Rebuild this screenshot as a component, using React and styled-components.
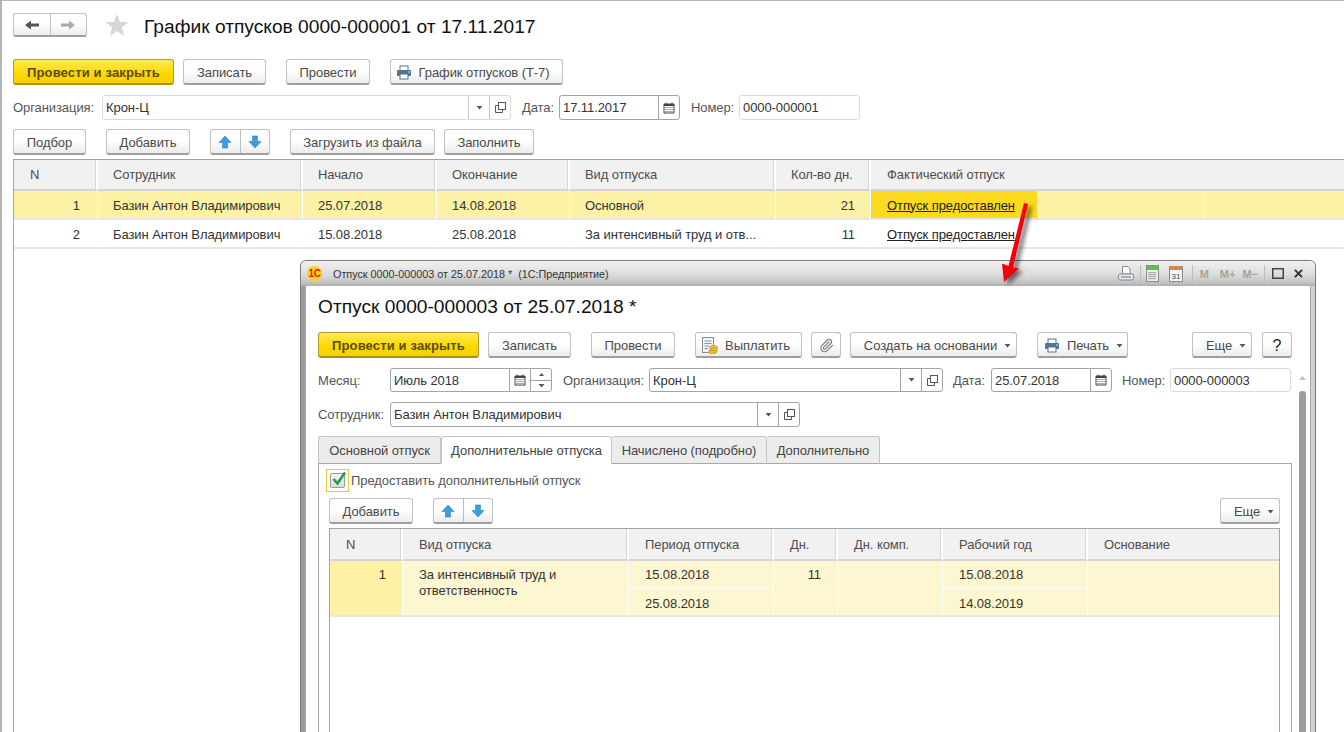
import React from 'react';
import styled, { createGlobalStyle } from 'styled-components';
import { Paperclip } from 'lucide-react';

const GlobalStyle = createGlobalStyle`
	html, body {
		margin: 0;
		padding: 0;
		background: #fff;
	}
	* {
		box-sizing: border-box;
	}
	body {
		font-family: "Liberation Sans", Arial, sans-serif;
		font-size: 13px;
		letter-spacing: -0.08px;
		color: #4a4a4a;
	}
`;

const Page = styled.div`
	position: relative;
	width: 1344px;
	height: 732px;
	overflow: hidden;
	display: flex;
	flex-direction: column;
	padding: 13px 0 0 11px;
	border-top: 1px solid #b5b5b5;
	border-left: 2px solid #b5b5b5;
`;

const HeaderRow = styled.div`
	display: flex;
	align-items: stretch;
	height: 24px;
	margin-top: -1px;
`;

const Title = styled.h1`
	margin: 0 0 0 15px;
	padding-top: 4px;
	align-self: center;
	font-weight: normal;
	font-size: 19.2px;
	letter-spacing: 0;
	line-height: 24px;
	color: #111;
	white-space: nowrap;
`;

const Star = styled.svg`
	width: 24px;
	height: 24px;
	margin-left: 18px;
	flex: none;
	align-self: center;
`;

const Toolbar = styled.div`
	display: flex;
	align-items: stretch;
	height: 26px;
	margin-top: ${p => p.$mt || 0}px;
`;

const Button = styled.div`
	display: flex;
	align-items: center;
	justify-content: center;
	gap: ${p => p.$gap || 7}px;
	width: ${p => p.$w}px;
	margin-left: ${p => p.$ml || 0}px;
	padding: 2px ${p => p.$pr || 0}px 0 ${p => p.$pl || 0}px;
	flex: none;
	border: 1px solid #c0c0c0;
	border-bottom: 2px solid #9e9e9e;
	border-radius: 3px;
	background: linear-gradient(#fff, #fff 45%, #ececec);
	color: #4a4a4a;
	white-space: nowrap;
`;

const DefaultButton = styled(Button)`
	border: 1px solid #b59c24;
	border-bottom: 2px solid #a88f1a;
	background: linear-gradient(#ffea55, #fcd800 60%, #f6d100);
	font-weight: bold;
	letter-spacing: 0.15px;
	color: #5a4a10;
`;

const HelpButton = styled(Button)`
	font-size: 16px;
	color: #222;
`;

const ButtonGroup = styled.div`
	display: flex;
	width: ${p => p.$w}px;
	margin-left: ${p => p.$ml || 0}px;
	flex: none;
	border: 1px solid #c0c0c0;
	border-bottom: 2px solid #9e9e9e;
	border-radius: 3px;
	background: linear-gradient(#fff, #fff 45%, #ececec);
`;

const GroupPart = styled.div`
	flex: 1;
	display: flex;
	align-items: center;
	justify-content: center;
	& + & {
		border-left: 1px solid #bdbdbd;
	}
`;

const FormRow = styled.div`
	display: flex;
	align-items: stretch;
	height: ${p => p.$h || 25}px;
	margin-top: ${p => p.$mt || 0}px;
`;

const Label = styled.div`
	display: flex;
	align-items: center;
	width: ${p => p.$w}px;
	margin-left: ${p => p.$ml || 0}px;
	flex: none;
	color: #555;
	white-space: nowrap;
`;

const Input = styled.div`
	display: flex;
	width: ${p => p.$w}px;
	flex: none;
	border: 1px solid ${p => (p.$light ? '#dcdcdc' : '#a4a4a4')};
	border-radius: 3px;
	background: #fff;
`;

const InputText = styled.div`
	flex: 1;
	display: flex;
	align-items: center;
	padding-left: 3px;
	color: #333;
	white-space: nowrap;
`;

const Addon = styled.div`
	width: 21px;
	flex: none;
	display: flex;
	flex-direction: column;
	align-items: center;
	justify-content: center;
	border-left: 1px solid ${p => (p.$light ? '#c8c8c8' : '#a4a4a4')};
`;

const SpinPart = styled.div`
	flex: 1;
	width: 100%;
	display: flex;
	align-items: center;
	justify-content: center;
	& + & {
		border-top: 1px solid #a4a4a4;
	}
`;

const TableWrap = styled.div`
	flex: 1;
	margin-top: ${p => p.$mt || 0}px;
	border-top: 1px solid #a3a3a3;
	border-left: 1px solid #a3a3a3;
	border-right: ${p => (p.$closed ? '1px solid #a3a3a3' : 'none')};
`;

const Grid = styled.div`
	--cell-pad: ${p => p.$pad}px;
	display: grid;
	grid-template-columns: ${p => p.$cols};
	grid-template-rows: ${p => p.$rows};
`;

const HeadCell = styled.div`
	display: flex;
	align-items: center;
	padding-left: ${p => (p.$pl ? `${p.$pl}px` : 'var(--cell-pad)')};
	background: #f1f1f1;
	border-right: ${p => (p.$last ? 'none' : '2px solid #fff')};
	border-bottom: 2px solid #d4d4d4;
	grid-column: span ${p => p.$span || 1};
	color: #4d4d4d;
	box-shadow: ${p => (p.$last ? 'none' : 'inset -1px 0 0 #d8d8d8')};
	white-space: nowrap;
`;

const Cell = styled.div`
	display: flex;
	align-items: ${p => (p.$top ? 'flex-start' : 'center')};
	justify-content: ${p => (p.$right ? 'flex-end' : 'flex-start')};
	padding-top: ${p => (p.$top ? 6 : 2)}px;
	padding-right: ${p => p.$right || 0}px;
	padding-left: ${p => (p.$right ? '0' : p.$pl ? `${p.$pl}px` : 'var(--cell-pad)')};
	background: ${p => p.$bg || '#fff'};
	border-right: 1px solid ${p => (p.$line ? '#fff' : 'transparent')};
	border-bottom: 2px solid #e6e6e6;
	grid-column: span ${p => p.$span || 1};
	grid-row: span ${p => p.$rowSpan || 1};
	color: #333;
	white-space: nowrap;
	line-height: 16px;
`;

const DateCell = styled(Cell)`
	padding-top: ${p => (p.$split ? 0 : 4)}px;
	border-bottom: ${p => (p.$split ? '1px solid #fff' : '2px solid #e6e6e6')};
`;

const LinkText = styled.span`
	color: #222;
	text-decoration: underline;
`;

const WindowFrame = styled.div`
	position: absolute;
	left: 298px;
	top: 259px;
	width: 1016px;
	height: 500px;
	display: flex;
	flex-direction: column;
	border: 1px solid #7d7d7d;
	border-radius: 6px 6px 0 0;
	background: linear-gradient(to right, #9a9a9a, #d2d2d2);
	box-shadow: 0 0 1px rgba(0, 0, 0, 0.25);
`;

const TitleBar = styled.div`
	height: 25px;
	flex: none;
	display: flex;
	align-items: center;
	padding: 0 12px 0 6px;
	border-radius: 5px 5px 0 0;
	background: linear-gradient(#f1f1f1, #dcdcdc 55%, #c4c4c4 85%, #aeaeae);
	color: #333;
	font-size: 10.8px;
	letter-spacing: 0;
`;

const Logo = styled.div`
	width: 15px;
	height: 15px;
	flex: none;
	display: flex;
	align-items: center;
	justify-content: center;
	border-radius: 50%;
	background: #fbd21b;
	color: #d9231a;
	font-weight: bold;
	font-size: 10px;
	letter-spacing: -0.5px;
`;

const TitleText = styled.div`
	margin-left: 11px;
	flex: 1;
	white-space: pre;
`;

const BarIcons = styled.div`
	display: flex;
	align-items: center;
	height: 100%;
`;

const BarIcon = styled.svg`
	flex: none;
	margin-left: ${p => p.$ml || 0}px;
`;

const BarSep = styled.div`
	width: 1px;
	height: 18px;
	margin-left: ${p => p.$ml}px;
	background: #bcbcbc;
`;

const MemKey = styled.div`
	margin-left: ${p => p.$ml}px;
	font-size: 11px;
	font-weight: bold;
	color: #a8a19b;
`;

const WindowBody = styled.div`
	position: relative;
	flex: 1;
	display: flex;
	flex-direction: column;
	margin: 0 4px;
	padding: 0 18px 0 12px;
	background: #fff;
	border-left: 1px solid #a8a8a8;
	border-right: 1px solid #a8a8a8;
`;

const WindowHeading = styled.h2`
	margin: 9px 0 0;
	height: 37px;
	font-weight: normal;
	font-size: 19.2px;
	letter-spacing: 0;
	line-height: 24px;
	color: #111;
	white-space: nowrap;
`;

const Tabs = styled.div`
	display: flex;
	height: 28px;
	margin-top: 9px;
	margin-bottom: -1px;
	position: relative;
	z-index: 1;
`;

const Tab = styled.div`
	width: ${p => p.$w}px;
	display: flex;
	align-items: center;
	justify-content: center;
	border: 1px solid #c4c4c4;
	border-left: ${p => (p.$first || p.$active ? '1px solid #c4c4c4' : 'none')};
	border-bottom: 1px solid ${p => (p.$active ? '#fff' : '#a8a8a8')};
	border-radius: 3px 3px 0 0;
	background: ${p => (p.$active ? '#fff' : '#ececec')};
	color: #444;
	white-space: nowrap;
`;

const TabPanel = styled.div`
	flex: 1;
	display: flex;
	flex-direction: column;
	padding: 5px 11px 0 10px;
	border: 1px solid #a8a8a8;
	border-bottom: none;
`;

const CheckRow = styled.div`
	display: flex;
	align-items: center;
	height: 23px;
	margin-left: -3px;
	color: #555;
`;

const CheckFocus = styled.div`
	width: 23px;
	height: 23px;
	display: flex;
	align-items: center;
	justify-content: center;
	margin-right: 2px;
	border: 1px solid #f2c832;
`;

const CheckBox = styled.div`
	position: relative;
	width: 15px;
	height: 15px;
	border: 1px solid #9a9a9a;
	border-radius: 2px;
	background: linear-gradient(#f2f2f2, #dcdcdc);
`;

const CheckMark = styled.svg`
	position: absolute;
	left: 0;
	top: -4px;
`;

const RightGroup = styled.div`
	margin-left: auto;
	display: flex;
	align-items: stretch;
`;

const Scrollbar = styled.div`
	position: absolute;
	right: 4px;
	top: 90px;
	bottom: 0;
	width: 7px;
	display: flex;
	flex-direction: column;
	align-items: center;
	gap: 11px;
`;

const ScrollThumb = styled.div`
	flex: 1;
	width: 7px;
	border-radius: 3px 3px 0 0;
	background: #9d9d9d;
`;

const ScrollUp = styled.svg`
	flex: none;
`;

const RedArrow = styled.svg`
	position: absolute;
	left: 988px;
	top: 194px;
	filter: drop-shadow(4px 3px 2px rgba(0, 0, 0, 0.55));
`;

const ArrowLeft = ({ color }) => (
	<svg width="16" height="12" viewBox="0 0 16 12">
		<path d="M1 6 L7 1.5 V4.5 H15 V7.5 H7 V10.5 Z" fill={color} />
	</svg>
);

const ArrowRight = ({ color }) => (
	<svg width="16" height="12" viewBox="0 0 16 12">
		<path d="M15 6 L9 1.5 V4.5 H1 V7.5 H9 V10.5 Z" fill={color} />
	</svg>
);

const BlueUp = () => (
	<svg width="14" height="14" viewBox="0 0 14 14">
		<path d="M7 1 L13 7.5 H9.5 V13 H4.5 V7.5 H1 Z" fill="#3c9fdc" stroke="#2a7fb8" strokeWidth="0.6" />
	</svg>
);

const BlueDown = () => (
	<svg width="14" height="14" viewBox="0 0 14 14">
		<path d="M7 13 L13 6.5 H9.5 V1 H4.5 V6.5 H1 Z" fill="#3c9fdc" stroke="#2a7fb8" strokeWidth="0.6" />
	</svg>
);

const Printer = () => (
	<svg width="16" height="15" viewBox="0 0 16 15">
		<rect x="4" y="1" width="8" height="5" fill="#fff" stroke="#4f7496" />
		<rect x="1" y="5" width="14" height="6" rx="1" fill="#4f7496" />
		<rect x="4" y="9" width="8" height="5" fill="#fff" stroke="#4f7496" />
		<rect x="12" y="6.5" width="2" height="1" fill="#cfe0ee" />
	</svg>
);

const PayIcon = () => (
	<svg width="17" height="17" viewBox="0 0 17 17">
		<rect x="1.5" y="0.5" width="11" height="15" fill="#f6f6f6" stroke="#8a8a8a" />
		<path d="M3.5 4 H10.5 M3.5 6.5 H10.5 M3.5 9 H8 M3.5 11.5 H7" stroke="#7f93a8" />
		<ellipse cx="12.5" cy="10.5" rx="4" ry="2" fill="#f0c23a" stroke="#b98c12" strokeWidth="0.7" />
		<ellipse cx="12.5" cy="13" rx="4" ry="2" fill="#f0c23a" stroke="#b98c12" strokeWidth="0.7" />
		<ellipse cx="11.5" cy="15" rx="4" ry="1.7" fill="#eeb92c" stroke="#b98c12" strokeWidth="0.7" />
	</svg>
);

const Caret = ({ color = '#555' }) => (
	<svg width="7" height="4" viewBox="0 0 7 4">
		<path d="M0.5 0 H6.5 L3.5 3.5 Z" fill={color} />
	</svg>
);

const CaretUp = () => (
	<svg width="5" height="3" viewBox="0 0 5 3">
		<path d="M0 3 H5 L2.5 0 Z" fill="#555" />
	</svg>
);

const OpenIcon = () => (
	<svg width="11" height="11" viewBox="0 0 11 11">
		<rect x="3.5" y="0.5" width="7" height="7" fill="#fff" stroke="#555" />
		<path d="M3 3.5 H0.5 V10.5 H7.5 V8" fill="none" stroke="#555" />
	</svg>
);

const CalendarIcon = () => (
	<svg width="12" height="12" viewBox="0 0 12 12">
		<path d="M1 2 H11 V11 H1 Z" fill="#fff" stroke="#444" />
		<rect x="1" y="2" width="10" height="2" fill="#444" />
		<path d="M3 0.5 V2 M9 0.5 V2" stroke="#444" />
		<path d="M2.5 5.5 H9.5 M2.5 7.5 H9.5 M2.5 9.5 H9.5" stroke="#555" strokeDasharray="1 1" />
	</svg>
);

function SelectAddons({ light }) {
	return (
		<>
			<Addon $light={light}><Caret /></Addon>
			<Addon $light={light}><OpenIcon /></Addon>
		</>
	);
}

function WindowIcons() {
	return (
		<BarIcons>
			<BarIcon width="16" height="16" viewBox="0 0 16 16">
				<path d="M4.5 0.5 H10 L12 3 V8 H4.5 Z" fill="#fff" stroke="#8b8b8b" />
				<rect x="0.5" y="8" width="15" height="6" rx="1.5" fill="#e8e8e8" stroke="#77858f" />
				<path d="M3 11 H13" stroke="#5e7482" />
			</BarIcon>
			<BarSep $ml={6} />
			<BarIcon $ml={5} width="13" height="17" viewBox="0 0 13 17">
				<rect x="0.5" y="0.5" width="12" height="16" fill="#ededed" stroke="#8c8c8c" />
				<rect x="1" y="1" width="11" height="4" fill="#5cc24e" />
				<path d="M3 7 V15 M5 7 V15 M7 7 V15 M9 7 V15" stroke="#6e6e6e" strokeDasharray="1.2 0.8" />
			</BarIcon>
			<BarIcon $ml={10} width="14" height="17" viewBox="0 0 14 17">
				<rect x="0.5" y="1.5" width="13" height="15" fill="#f4f4f4" stroke="#8c8c8c" />
				<rect x="1" y="1" width="12" height="4" fill="#cf8a55" />
				<text x="7" y="14" textAnchor="middle" fontSize="8" fontFamily="Liberation Sans" fill="#444">31</text>
			</BarIcon>
			<BarSep $ml={9} />
			<MemKey $ml={7}>M</MemKey>
			<MemKey $ml={11}>M+</MemKey>
			<MemKey $ml={7}>M−</MemKey>
			<BarSep $ml={6} />
			<BarIcon $ml={7} width="12" height="11" viewBox="0 0 12 11">
				<rect x="0.75" y="0.75" width="10.5" height="9.5" fill="none" stroke="#444" strokeWidth="1.5" />
			</BarIcon>
			<BarIcon $ml={10} width="9" height="9" viewBox="0 0 10 10">
				<path d="M1 1 L9 9 M9 1 L1 9" stroke="#333" strokeWidth="2.2" />
			</BarIcon>
		</BarIcons>
	);
}

const yellow = '#fdf1a6';
const pale = '#fcf6d1';

export default function App() {
	return (
		<Page>
			<GlobalStyle />
			<HeaderRow>
				<ButtonGroup $w={74}>
					<GroupPart><ArrowLeft color="#555" /></GroupPart>
					<GroupPart><ArrowRight color="#aaa" /></GroupPart>
				</ButtonGroup>
				<Star viewBox="0 0 24 24">
					<path d="M12 1 L15 9 L23.5 9.3 L16.8 14.5 L19.2 23 L12 18 L4.8 23 L7.2 14.5 L0.5 9.3 L9 9 Z" fill="#d6d6d6" />
				</Star>
				<Title>График отпусков 0000-000001 от 17.11.2017</Title>
			</HeaderRow>

			<Toolbar $mt={22}>
				<DefaultButton $w={161}>Провести и закрыть</DefaultButton>
				<Button $w={83} $ml={9}>Записать</Button>
				<Button $w={84} $ml={20}>Провести</Button>
				<Button $w={173} $ml={20} $pr={8}><Printer />График отпусков (Т-7)</Button>
			</Toolbar>

			<FormRow $mt={10}>
				<Label $w={89}>Организация:</Label>
				<Input $w={409} $light>
					<InputText>Крон-Ц</InputText>
					<SelectAddons light />
				</Input>
				<Label $w={37} $ml={11}>Дата:</Label>
				<Input $w={121}>
					<InputText>17.11.2017</InputText>
					<Addon><CalendarIcon /></Addon>
				</Input>
				<Label $w={48} $ml={11}>Номер:</Label>
				<Input $w={121} $light>
					<InputText>0000-000001</InputText>
				</Input>
			</FormRow>

			<Toolbar $mt={9}>
				<Button $w={73}>Подбор</Button>
				<Button $w={84} $ml={20}>Добавить</Button>
				<ButtonGroup $w={60} $ml={20}>
					<GroupPart><BlueUp /></GroupPart>
					<GroupPart><BlueDown /></GroupPart>
				</ButtonGroup>
				<Button $w={145} $ml={20}>Загрузить из файла</Button>
				<Button $w={90} $ml={9}>Заполнить</Button>
			</Toolbar>

			<TableWrap $mt={4}>
				<Grid $pad={15} $cols="84px 205px 134px 133px 206px 95px 166px 167px 1fr" $rows="31px 29px 29px">
					<HeadCell $pl={16}>N</HeadCell>
					<HeadCell>Сотрудник</HeadCell>
					<HeadCell>Начало</HeadCell>
					<HeadCell>Окончание</HeadCell>
					<HeadCell>Вид отпуска</HeadCell>
					<HeadCell>Кол-во дн.</HeadCell>
					<HeadCell $span={3} $last $pl={16}>Фактический отпуск</HeadCell>

					<Cell $bg={yellow} $line $right={17}>1</Cell>
					<Cell $bg={yellow} $line>Базин Антон Владимирович</Cell>
					<Cell $bg={yellow} $line>25.07.2018</Cell>
					<Cell $bg={yellow} $line>14.08.2018</Cell>
					<Cell $bg={yellow} $line>Основной</Cell>
					<Cell $bg={yellow} $line $right={15}>21</Cell>
					<Cell $bg="#fbd91f" $pl={16}><LinkText>Отпуск предоставлен</LinkText></Cell>
					<Cell $bg={yellow} $line />
					<Cell $bg={yellow} />

					<Cell $right={17}>2</Cell>
					<Cell>Базин Антон Владимирович</Cell>
					<Cell>15.08.2018</Cell>
					<Cell>25.08.2018</Cell>
					<Cell>За интенсивный труд и отв...</Cell>
					<Cell $right={15}>11</Cell>
					<Cell $span={3} $pl={16}><LinkText>Отпуск предоставлен</LinkText></Cell>
				</Grid>
			</TableWrap>

			<WindowFrame>
				<TitleBar>
					<Logo>1С</Logo>
					<TitleText>Отпуск 0000-000003 от 25.07.2018 *  (1С:Предприятие)</TitleText>
					<WindowIcons />
				</TitleBar>
				<WindowBody>
					<WindowHeading>Отпуск 0000-000003 от 25.07.2018 *</WindowHeading>
					<Toolbar>
						<DefaultButton $w={161}>Провести и закрыть</DefaultButton>
						<Button $w={83} $ml={9}>Записать</Button>
						<Button $w={84} $ml={20}>Провести</Button>
						<Button $w={107} $ml={20} $pr={6}><PayIcon />Выплатить</Button>
						<Button $w={30} $ml={9}>
							<Paperclip size={15} color="#777" strokeWidth={1.8} />
						</Button>
						<Button $w={167} $ml={9} $pl={8}>Создать на основании<Caret /></Button>
						<Button $w={91} $ml={20} $pl={2}><Printer />Печать<Caret /></Button>
						<RightGroup>
							<Button $w={60} $pl={8}>Еще<Caret /></Button>
							<HelpButton $w={30} $ml={10}>?</HelpButton>
						</RightGroup>
					</Toolbar>

					<FormRow $mt={10} $h={24}>
						<Label $w={72}>Месяц:</Label>
						<Input $w={162}>
							<InputText>Июль 2018</InputText>
							<Addon><CalendarIcon /></Addon>
							<Addon>
								<SpinPart><CaretUp /></SpinPart>
								<SpinPart><Caret /></SpinPart>
							</Addon>
						</Input>
						<Label $w={86} $ml={11}>Организация:</Label>
						<Input $w={294}>
							<InputText>Крон-Ц</InputText>
							<SelectAddons />
						</Input>
						<Label $w={38} $ml={10}>Дата:</Label>
						<Input $w={121}>
							<InputText>25.07.2018</InputText>
							<Addon><CalendarIcon /></Addon>
						</Input>
						<Label $w={48} $ml={10}>Номер:</Label>
						<Input $w={121} $light>
							<InputText>0000-000003</InputText>
						</Input>
					</FormRow>

					<FormRow $mt={10}>
						<Label $w={72}>Сотрудник:</Label>
						<Input $w={410}>
							<InputText>Базин Антон Владимирович</InputText>
							<SelectAddons />
						</Input>
					</FormRow>

					<Tabs>
						<Tab $w={123} $first>Основной отпуск</Tab>
						<Tab $w={171} $active>Дополнительные отпуска</Tab>
						<Tab $w={155}>Начислено (подробно)</Tab>
						<Tab $w={113}>Дополнительно</Tab>
					</Tabs>

					<TabPanel>
						<CheckRow>
							<CheckFocus>
								<CheckBox>
									<CheckMark width="16" height="17" viewBox="0 0 16 17">
										<path d="M2.5 9 L6.5 13.5 L14 2.5" fill="none" stroke="#1f9a5a" strokeWidth="2.6" />
									</CheckMark>
								</CheckBox>
							</CheckFocus>
							Предоставить дополнительный отпуск
						</CheckRow>

						<Toolbar $mt={6}>
							<Button $w={84}>Добавить</Button>
							<ButtonGroup $w={60} $ml={20}>
								<GroupPart><BlueUp /></GroupPart>
								<GroupPart><BlueDown /></GroupPart>
							</ButtonGroup>
							<RightGroup>
								<Button $w={60} $pl={8}>Еще<Caret /></Button>
							</RightGroup>
						</Toolbar>

						<TableWrap $mt={4} $closed>
							<Grid $pad={16} $cols="73px 226px 145px 64px 105px 145px 1fr" $rows="32px 28px 28px">
								<HeadCell>N</HeadCell>
								<HeadCell>Вид отпуска</HeadCell>
								<HeadCell>Период отпуска</HeadCell>
								<HeadCell>Дн.</HeadCell>
								<HeadCell>Дн. комп.</HeadCell>
								<HeadCell>Рабочий год</HeadCell>
								<HeadCell $last>Основание</HeadCell>

								<Cell $bg={yellow} $line $right={16} $top $rowSpan={2}>1</Cell>
								<Cell $bg={pale} $line $top $rowSpan={2}>За интенсивный труд и<br />ответственность</Cell>
								<DateCell $bg={pale} $line $split>15.08.2018</DateCell>
								<Cell $bg={pale} $line $right={16} $top $rowSpan={2}>11</Cell>
								<Cell $bg={pale} $line $rowSpan={2} />
								<DateCell $bg={pale} $line $split>15.08.2018</DateCell>
								<Cell $bg={pale} $rowSpan={2} />
								<DateCell $bg={pale} $line>25.08.2018</DateCell>
								<DateCell $bg={pale} $line>14.08.2019</DateCell>
							</Grid>
						</TableWrap>
					</TabPanel>

					<Scrollbar>
						<ScrollUp width="7" height="4" viewBox="0 0 7 4">
							<path d="M0 4 H7 L3.5 0 Z" fill="#c2c2c2" />
						</ScrollUp>
						<ScrollThumb />
					</Scrollbar>
				</WindowBody>
			</WindowFrame>

			<RedArrow width="40" height="95" viewBox="0 0 40 95">
				<path d="M38 9 L34 8 L18.5 71 L12 68.5 L14 87 L29 73.5 L23 72.5 Z" fill="#f5000a" />
			</RedArrow>
		</Page>
	);
}
